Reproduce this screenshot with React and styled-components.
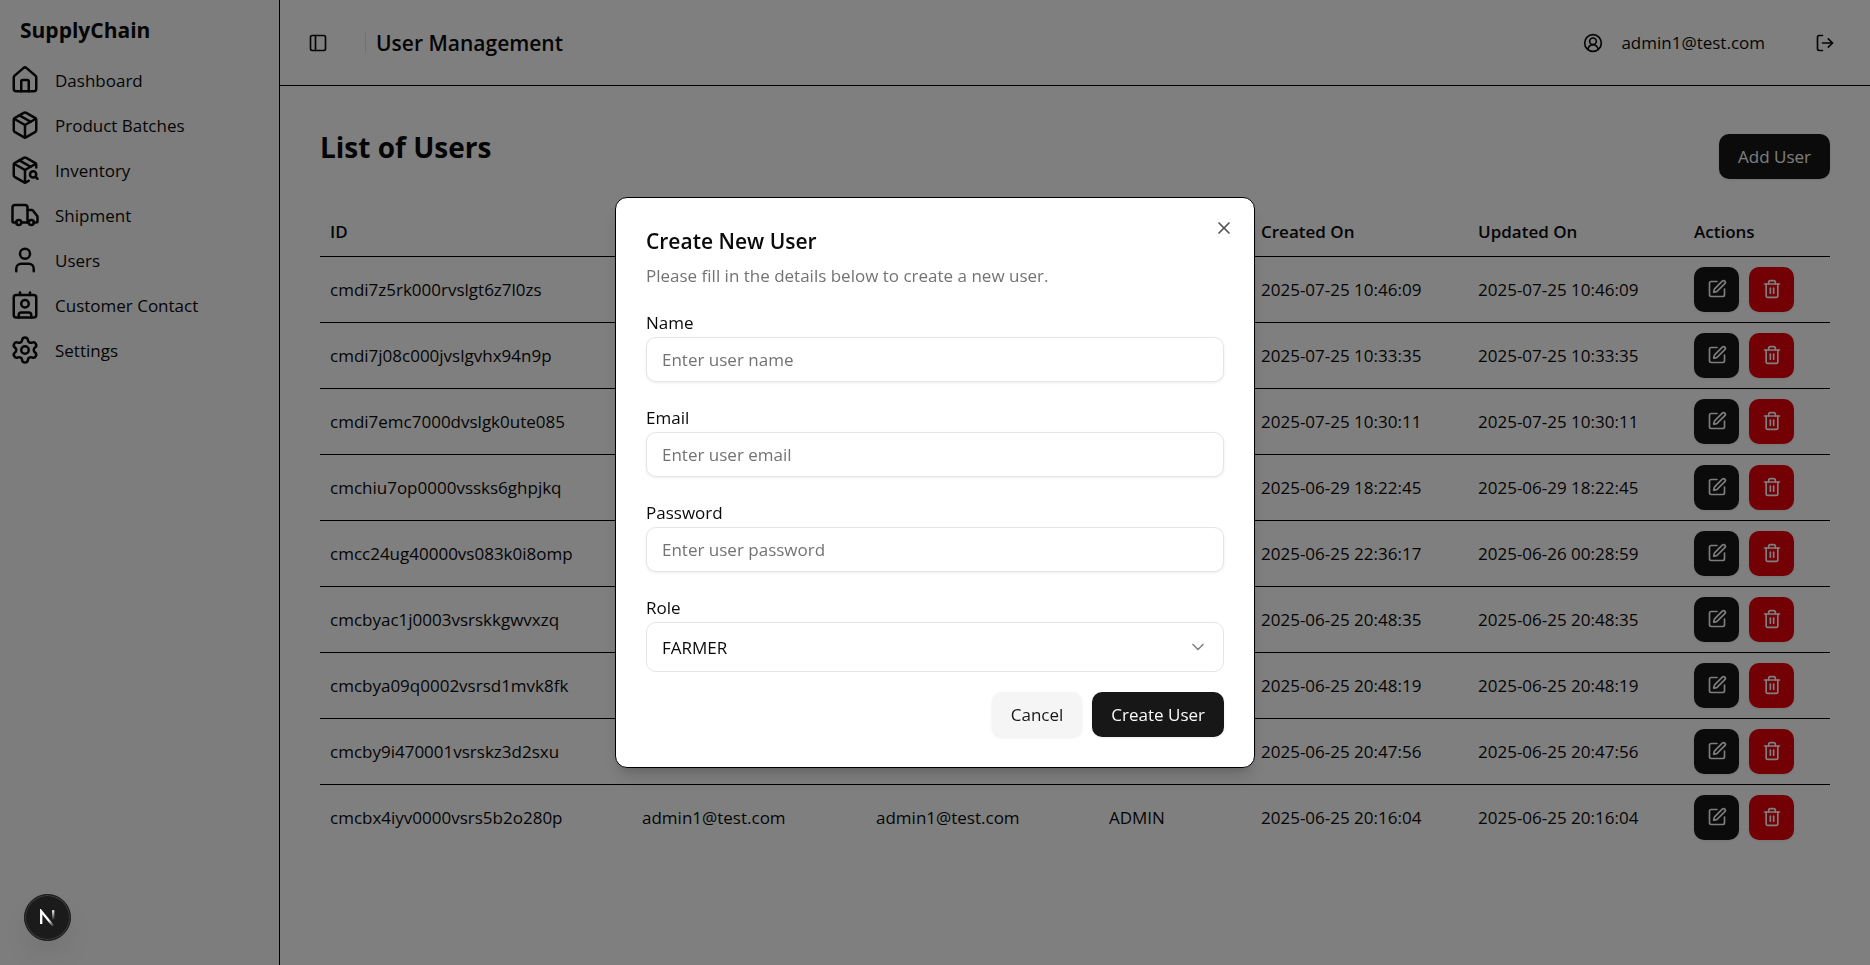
import React from "react";
import styled, { createGlobalStyle, css } from "styled-components";
import {
  House, Package, PackageSearch, Truck, User, Contact, Settings,
  PanelLeft, CircleUserRound, LogOut, SquarePen, Trash2, X, ChevronDown,
} from "lucide-react";

const GlobalStyle = createGlobalStyle`
  *, *::before, *::after { box-sizing: border-box; }
  body {
    margin: 0;
    background: #fff;
    color: #0a0a0a;
    font: 400 17px/25px "Open Sans", "Noto Sans", sans-serif;
  }
  h1, h2, h3, p, ul { margin: 0; padding: 0; }
  button, input, select { font: inherit; color: inherit; }
`;

const Shell = styled.div`
  display: flex;
  min-height: 100vh;
`;

const Sidebar = styled.aside`
  flex: 0 0 280px;
  border-right: 1px solid #000;
  padding: 15px 10px;
  background: #fafafa;
`;

const Brand = styled.h2`
  padding: 0 10px;
  margin-bottom: 20px;
  font-size: 21px;
  line-height: 30px;
  font-weight: 700;
`;

const NavList = styled.ul`
  list-style: none;
  display: flex;
  flex-direction: column;
  gap: 15px;
`;

const NavLink = styled.a`
  display: flex;
  align-items: center;
  gap: 15px;
  height: 30px;
  color: inherit;
  text-decoration: none;
`;

const Content = styled.div`
  flex: 1;
  min-width: 0;
`;

const Header = styled.header`
  display: flex;
  align-items: center;
  height: 86px;
  padding: 0 35px 0 28px;
  border-bottom: 1px solid #000;
`;

const IconButton = styled.button`
  display: flex;
  padding: 0;
  border: 0;
  background: none;
`;

const Divider = styled.span`
  width: 1px;
  height: 20px;
  margin: 0 10px 0 37px;
  background: #e5e5e5;
`;

const PageTitle = styled.h1`
  flex: 1;
  font-size: 21px;
  line-height: 30px;
  font-weight: 600;
`;

const Account = styled.div`
  display: flex;
  align-items: center;
  gap: 18px;
  margin-right: 50px;
`;

const Main = styled.main`
  padding: 48px 40px;
`;

const ListHead = styled.div`
  display: flex;
  justify-content: space-between;
  align-items: flex-start;
  margin-bottom: 29px;
`;

const ListTitle = styled.h2`
  font-size: 28px;
  line-height: 27px;
  font-weight: 700;
`;

const fills = {
  dark: css`background: #171717; color: #fafafa;`,
  light: css`background: #f5f5f5; color: #171717;`,
  danger: css`background: #e7000b; color: #fff;`,
};

const Button = styled.button`
  display: inline-flex;
  align-items: center;
  justify-content: center;
  height: 45px;
  padding: 0 19px;
  border: 0;
  border-radius: 10px;
  box-shadow: 0 1px 3px rgba(0, 0, 0, 0.08);
  ${(p) => fills[p.$fill]}
`;

const SquareButton = styled(Button)`
  width: 45px;
  padding: 0;
`;

const Table = styled.table`
  width: 100%;
  border-collapse: collapse;
  table-layout: fixed;
  tr { border-bottom: 1px solid #000; }
  tbody tr:last-child { border-bottom: 0; }
  th, td { padding: 0 10px; text-align: left; white-space: nowrap; }
  th { height: 48px; font-weight: 600; }
  td { height: 66px; }
`;

const Col = styled.col`
  width: ${(p) => p.$w}px;
`;

const Actions = styled.div`
  display: flex;
  gap: 10px;
`;

const Overlay = styled.div`
  position: fixed;
  inset: 0;
  display: flex;
  align-items: center;
  justify-content: center;
  background: rgba(0, 0, 0, 0.5);
`;

const Dialog = styled.section`
  position: relative;
  width: 640px;
  padding: 30px;
  border: 1px solid #000;
  border-radius: 12px;
  background: #fff;
  box-shadow: 0 12px 18px -4px rgba(0, 0, 0, 0.15), 0 5px 8px -4px rgba(0, 0, 0, 0.15);
`;

const CloseButton = styled(IconButton)`
  position: absolute;
  top: 20px;
  right: 20px;
  opacity: 0.7;
`;

const DialogTitle = styled.h2`
  font-size: 21px;
  line-height: 27px;
  font-weight: 600;
`;

const DialogText = styled.p`
  margin: 8px 0 22px;
  color: #737373;
`;

const Form = styled.form`
  display: flex;
  flex-direction: column;
  gap: 23px;
`;

const Field = styled.div`
  display: flex;
  flex-direction: column;
  gap: 2px;
`;

const controlStyle = css`
  width: 100%;
  padding: 0 15px;
  border: 1px solid #e5e5e5;
  border-radius: 10px;
  background: #fff;
`;

const TextInput = styled.input`
  ${controlStyle}
  height: 45px;
  box-shadow: 0 1px 3px rgba(0, 0, 0, 0.08);
  &::placeholder { color: #737373; opacity: 1; }
`;

const SelectWrap = styled.div`
  position: relative;
  svg {
    position: absolute;
    right: 16px;
    top: 15px;
    opacity: 0.5;
    pointer-events: none;
  }
`;

const Select = styled.select`
  ${controlStyle}
  display: block;
  height: 50px;
  appearance: none;
`;

const DialogActions = styled.div`
  display: flex;
  justify-content: flex-end;
  gap: 10px;
  margin-top: 20px;
`;

const DevBadge = styled.button`
  position: fixed;
  left: 24px;
  bottom: 24px;
  display: flex;
  align-items: center;
  justify-content: center;
  width: 47px;
  height: 47px;
  padding: 0;
  border: 1px solid #171717;
  border-radius: 50%;
  background: #1b1b1b;
  box-shadow: inset 0 0 0 1px #3d3d3d, 0 16px 32px -8px rgba(0, 0, 0, 0.14);
`;

const nav = [
  ["Dashboard", House], ["Product Batches", Package], ["Inventory", PackageSearch],
  ["Shipment", Truck], ["Users", User], ["Customer Contact", Contact], ["Settings", Settings],
];

const columns = [
  ["id", "ID", 312], ["name", "", 234], ["email", "", 233], ["role", "", 152],
  ["created", "Created On", 217], ["updated", "Updated On", 216], ["actions", "Actions", 146],
];

const users = [
  ["cmdi7z5rk000rvslgt6z7l0zs", "", "", "", "2025-07-25 10:46:09", "2025-07-25 10:46:09"],
  ["cmdi7j08c000jvslgvhx94n9p", "", "", "", "2025-07-25 10:33:35", "2025-07-25 10:33:35"],
  ["cmdi7emc7000dvslgk0ute085", "", "", "", "2025-07-25 10:30:11", "2025-07-25 10:30:11"],
  ["cmchiu7op0000vssks6ghpjkq", "", "", "", "2025-06-29 18:22:45", "2025-06-29 18:22:45"],
  ["cmcc24ug40000vs083k0i8omp", "", "", "", "2025-06-25 22:36:17", "2025-06-26 00:28:59"],
  ["cmcbyac1j0003vsrskkgwvxzq", "", "", "", "2025-06-25 20:48:35", "2025-06-25 20:48:35"],
  ["cmcbya09q0002vsrsd1mvk8fk", "", "", "", "2025-06-25 20:48:19", "2025-06-25 20:48:19"],
  ["cmcby9i470001vsrskz3d2sxu", "", "", "", "2025-06-25 20:47:56", "2025-06-25 20:47:56"],
  ["cmcbx4iyv0000vsrs5b2o280p", "admin1@test.com", "admin1@test.com", "ADMIN", "2025-06-25 20:16:04", "2025-06-25 20:16:04"],
];

const fields = [
  ["name", "Name", "text", "Enter user name"],
  ["email", "Email", "email", "Enter user email"],
  ["password", "Password", "password", "Enter user password"],
];

const NextMark = () => (
  <svg width="17" height="18" viewBox="0 0 17 18" fill="none" aria-hidden="true">
    <defs>
      <linearGradient id="diag" x1="10" y1="11" x2="15" y2="17" gradientUnits="userSpaceOnUse">
        <stop stopColor="#fff" /><stop offset="1" stopColor="#fff" stopOpacity="0" />
      </linearGradient>
      <linearGradient id="stem" x1="14" y1="1" x2="14" y2="11" gradientUnits="userSpaceOnUse">
        <stop stopColor="#fff" /><stop offset="1" stopColor="#fff" stopOpacity="0" />
      </linearGradient>
    </defs>
    <path d="M2.2 15V2.2L14.6 17.4" stroke="url(#diag)" strokeWidth="2.3" />
    <path d="M14.2 1.2V11.5" stroke="url(#stem)" strokeWidth="2.3" />
  </svg>
);

export default function App() {
  return (
    <>
      <GlobalStyle />
      <Shell>
        <Sidebar>
          <Brand>SupplyChain</Brand>
          <nav>
            <NavList>
              {nav.map(([label, Icon]) => (
                <li key={label}>
                  <NavLink href="#"><Icon size={30} />{label}</NavLink>
                </li>
              ))}
            </NavList>
          </nav>
        </Sidebar>
        <Content>
          <Header>
            <IconButton aria-label="Toggle sidebar"><PanelLeft size={20} /></IconButton>
            <Divider />
            <PageTitle>User Management</PageTitle>
            <Account><CircleUserRound size={20} />admin1@test.com</Account>
            <IconButton aria-label="Log out"><LogOut size={20} /></IconButton>
          </Header>
          <Main>
            <ListHead>
              <ListTitle>List of Users</ListTitle>
              <Button $fill="dark">Add User</Button>
            </ListHead>
            <Table>
              <colgroup>{columns.map(([key, , w]) => <Col key={key} $w={w} />)}</colgroup>
              <thead>
                <tr>{columns.map(([key, label]) => <th key={key} scope="col">{label}</th>)}</tr>
              </thead>
              <tbody>
                {users.map((u) => (
                  <tr key={u[0]}>
                    {u.map((v, i) => <td key={i}>{v}</td>)}
                    <td>
                      <Actions>
                        <SquareButton $fill="dark" aria-label="Edit user"><SquarePen size={20} /></SquareButton>
                        <SquareButton $fill="danger" aria-label="Delete user"><Trash2 size={20} /></SquareButton>
                      </Actions>
                    </td>
                  </tr>
                ))}
              </tbody>
            </Table>
          </Main>
        </Content>
      </Shell>
      <Overlay>
        <Dialog role="dialog" aria-modal="true" aria-labelledby="dialog-title">
          <DialogTitle id="dialog-title">Create New User</DialogTitle>
          <DialogText>Please fill in the details below to create a new user.</DialogText>
          <Form>
            {fields.map(([id, label, type, hint]) => (
              <Field key={id}>
                <label htmlFor={id}>{label}</label>
                <TextInput id={id} type={type} placeholder={hint} />
              </Field>
            ))}
            <Field>
              <label htmlFor="role">Role</label>
              <SelectWrap>
                <Select id="role" defaultValue="FARMER"><option>FARMER</option></Select>
                <ChevronDown size={20} />
              </SelectWrap>
            </Field>
          </Form>
          <DialogActions>
            <Button $fill="light">Cancel</Button>
            <Button $fill="dark">Create User</Button>
          </DialogActions>
          <CloseButton aria-label="Close"><X size={20} /></CloseButton>
        </Dialog>
      </Overlay>
      <DevBadge aria-label="Open developer tools"><NextMark /></DevBadge>
    </>
  );
}
